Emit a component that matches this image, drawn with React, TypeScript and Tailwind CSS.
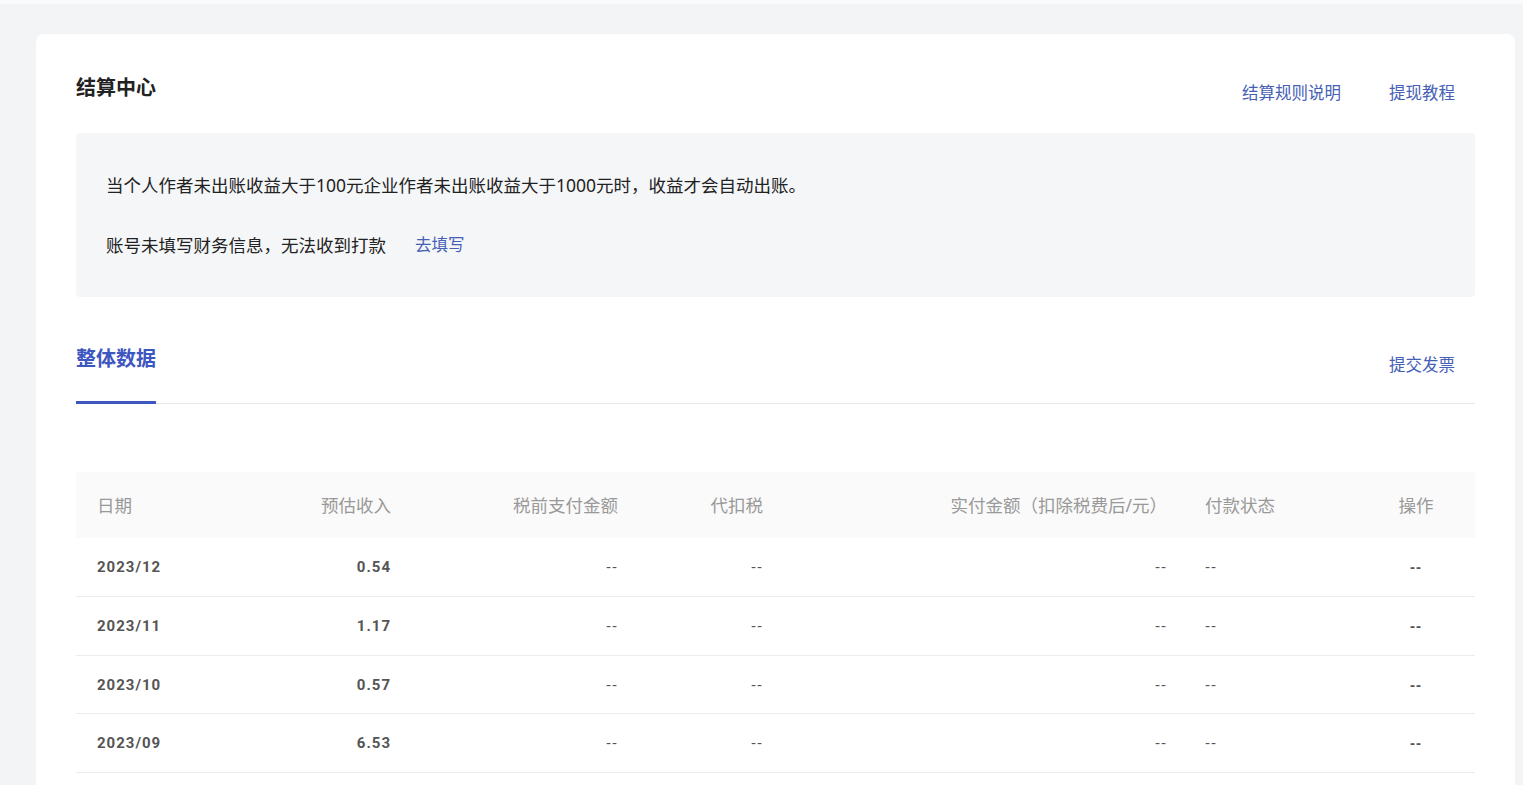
import React from "react";

const cjk = { fontFamily: '"Noto Sans", "Noto Sans CJK SC", sans-serif' };
const num = { fontFamily: 'Roboto, "Noto Sans", "Noto Sans CJK SC", sans-serif' };
const dash = { fontFamily: '"Liberation Sans", Arial, sans-serif' };

const rows = [
  { date: "2023/12", est: "0.54" },
  { date: "2023/11", est: "1.17" },
  { date: "2023/10", est: "0.57" },
  { date: "2023/09", est: "6.53" },
];

export default function App() {
  return (
    <div className="min-h-[785px] w-full bg-[#f3f4f6] overflow-hidden" style={cjk}>
      <div className="h-[4px] bg-[#fafafb]" />
      <div className="ml-[36px] mr-[8px] mt-[30px] min-h-[751px] rounded-t-[8px] bg-white px-[40px] pt-[40px] pb-[40px]">
        {/* header */}
        <div className="flex justify-between items-start h-[28px]">
          <div className="text-[20px] leading-[28px] font-bold text-[#222]">结算中心</div>
          <div className="flex gap-[48px] pt-[7px] pr-[20px] text-[16.5px] leading-[24px] text-[#4660b5]">
            <span>结算规则说明</span>
            <span>提现教程</span>
          </div>
        </div>

        {/* info box */}
        <div className="mt-[31px] rounded-[4px] bg-[#f5f6f8] px-[30px] py-[40px] text-[17.5px] leading-[24px] text-[#222]">
          <div>当个人作者未出账收益大于100元企业作者未出账收益大于1000元时，收益才会自动出账。</div>
          <div className="mt-[36px] flex items-center">
            <span>账号未填写财务信息，无法收到打款</span>
            <span className="ml-[29px] text-[16.5px] text-[#4660b5]">去填写</span>
          </div>
        </div>

        {/* tabs */}
        <div className="mt-[48px] flex justify-between items-start border-b border-[#e8e8e8]">
          <div className="-mb-px border-b-[3px] border-[#3d56c0] pb-[28px] text-[20px] leading-[28px] font-bold text-[#3d56c0]">
            整体数据
          </div>
          <div className="pt-[8px] pr-[20px] text-[16.5px] leading-[24px] text-[#4660b5]">提交发票</div>
        </div>

        {/* table */}
        <div className="mt-[68px]">
          <div className="grid grid-cols-[161px_174px_227px_145px_404px_170px_118px] h-[66px] items-center bg-[#fafafa] text-[17.5px] text-[#999]">
            <div className="pl-[21px]">日期</div>
            <div className="pr-[20px] text-right">预估收入</div>
            <div className="pr-[20px] text-right">税前支付金额</div>
            <div className="pr-[20px] text-right">代扣税</div>
            <div className="pr-[20px] text-right">实付金额（扣除税费后/元）</div>
            <div className="pl-[18px]">付款状态</div>
            <div className="text-center">操作</div>
          </div>
          {rows.map((r) => (
            <div
              key={r.date}
              className="grid grid-cols-[161px_174px_227px_145px_404px_170px_118px] h-[58.75px] pt-[1px] items-center border-b border-[#ececec] text-[15px] text-[#555]"
              style={num}
            >
              <div className="pl-[21px] font-bold tracking-[1px]">{r.date}</div>
              <div className="pr-[20px] text-right font-bold tracking-[1px]">{r.est}</div>
              <div className="pr-[20px] text-right tracking-[1px]" style={dash}>--</div>
              <div className="pr-[20px] text-right tracking-[1px]" style={dash}>--</div>
              <div className="pr-[20px] text-right tracking-[1px]" style={dash}>--</div>
              <div className="pl-[18px] tracking-[1px]" style={dash}>--</div>
              <div className="text-center font-bold tracking-[1px]" style={dash}>--</div>
            </div>
          ))}
        </div>
      </div>
    </div>
  );
}
